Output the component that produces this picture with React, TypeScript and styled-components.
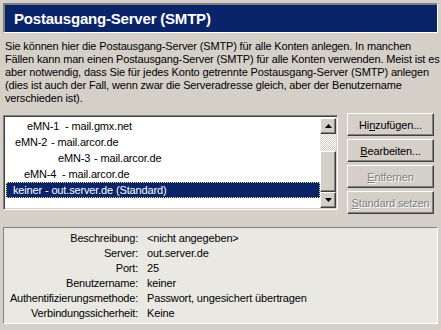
import styled, { createGlobalStyle, css } from "styled-components";

const GlobalStyle = createGlobalStyle`
  body {
    margin: 0;
    background: #d4d0c8;
    font-family: Tahoma, "Liberation Sans", Arial, sans-serif;
    font-size: 11px;
    color: #000;
  }
`;

const accounts = [
  { name: "eMN-1", host: "- mail.gmx.net", pad: 21, w: 38 },
  { name: "eMN-2", host: "- mail.arcor.de", pad: 9, w: 36 },
  { name: "eMN-3", host: "- mail.arcor.de", pad: 52, w: 36 },
  { name: "eMN-4", host: "- mail.arcor.de", pad: 18, w: 38 },
];

const details = [
  ["Beschreibung:", "<nicht angegeben>"],
  ["Server:", "out.server.de"],
  ["Port:", "25"],
  ["Benutzername:", "keiner"],
  ["Authentifizierungsmethode:", "Passwort, ungesichert übertragen"],
  ["Verbindungssicherheit:", "Keine"],
];

export default function App() {
  return (
    <>
      <GlobalStyle />
      <Page>
        <Header>
          <Title>Postausgang-Server (SMTP)</Title>
        </Header>
        <Description>
          Sie können hier die Postausgang-Server (SMTP) für alle Konten anlegen. In manchen
          <br />
          Fällen kann man einen Postausgang-Server (SMTP) für alle Konten verwenden. Meist ist es
          <br />
          aber notwendig, dass Sie für jedes Konto getrennte Postausgang-Server (SMTP) anlegen
          <br />
          (dies ist auch der Fall, wenn zwar die Serveradresse gleich, aber der Benutzername
          <br />
          verschieden ist).
        </Description>
        <Middle>
          <ListBox>
            <List>
              {accounts.map((a) => (
                <Item key={a.name}>
                  <Name $pad={a.pad} $w={a.w}>
                    {a.name}
                  </Name>
                  <span>{a.host}</span>
                </Item>
              ))}
              <Item $selected>
                <Name $pad={7}>keiner - out.server.de (Standard)</Name>
              </Item>
            </List>
            <ScrollBar>
              <ArrowBtn>
                <svg width="7" height="4" viewBox="0 0 7 4">
                  <path d="M3.5 0L7 4H0Z" fill="#000" />
                </svg>
              </ArrowBtn>
              <Track />
              <Thumb />
              <ArrowBtn>
                <svg width="7" height="4" viewBox="0 0 7 4">
                  <path d="M0 0H7L3.5 4Z" fill="#000" />
                </svg>
              </ArrowBtn>
            </ScrollBar>
          </ListBox>
          <Buttons>
            <Button>
              Hi<u>n</u>zufügen...
            </Button>
            <Button>
              <u>B</u>earbeiten...
            </Button>
            <Button disabled>
              <u>E</u>ntfernen
            </Button>
            <Button disabled>
              <u>S</u>tandard setzen
            </Button>
          </Buttons>
        </Middle>
        <Details>
          {details.map(([label, value]) => (
            <Row key={label}>
              <Label>{label}</Label>
              <Value>{value}</Value>
            </Row>
          ))}
        </Details>
      </Page>
    </>
  );
}

const raised = css`
  background: #d4d0c8;
  border: 1px solid;
  border-color: #fff #404040 #404040 #fff;
  box-shadow: inset -1px -1px 0 #808080;
  box-sizing: border-box;
`;

const Page = styled.div`
  width: 441px;
  height: 330px;
  box-sizing: border-box;
  padding: 3px 3px 0 3px;
  display: flex;
  flex-direction: column;
  overflow: hidden;
`;

const Header = styled.div`
  height: 30px;
  box-sizing: border-box;
  background: #0a246a;
  border: 1px solid;
  border-color: #808080 #fff #fff #808080;
  box-shadow: inset 1px 1px 0 #808080;
  display: flex;
  align-items: center;
  padding-left: 10px;
`;

const Title = styled.div`
  color: #fff;
  font-weight: bold;
  font-size: 15px;
  letter-spacing: -0.2px;
`;

const Description = styled.div`
  margin-top: 7px;
  padding-left: 2px;
  line-height: 13px;
  white-space: nowrap;
  letter-spacing: -0.15px;
`;

const Middle = styled.div`
  display: flex;
  align-items: flex-start;
  gap: 9px;
  margin-top: 8px;
`;

const ListBox = styled.div`
  width: 335px;
  height: 95px;
  margin-top: 2px;
  box-sizing: border-box;
  background: #fff;
  border: 1px solid;
  border-color: #808080 #fff #fff #808080;
  box-shadow: inset 1px 1px 0 #404040, inset -1px -1px 0 #d4d0c8;
  padding: 2px 1px 1px 2px;
  display: flex;
`;

const List = styled.div`
  flex: 1;
`;

const Item = styled.div<{ $selected?: boolean }>`
  height: 16px;
  line-height: 16px;
  display: flex;
  white-space: nowrap;
  letter-spacing: -0.15px;
  ${({ $selected }) =>
    $selected &&
    css`
      background: #0a246a;
      color: #fff;
      outline: 1px dotted #e8d878;
      outline-offset: -1px;
    `}
`;

const Name = styled.span<{ $pad: number; $w?: number }>`
  display: inline-block;
  padding-left: ${({ $pad }) => $pad}px;
  ${({ $w }) => $w !== undefined && `width: ${$w}px;`}
`;

const ScrollBar = styled.div`
  width: 16px;
  display: flex;
  flex-direction: column;
`;

const ArrowBtn = styled.div`
  ${raised};
  width: 16px;
  height: 16px;
  display: flex;
  align-items: center;
  justify-content: center;
`;

const Track = styled.div`
  height: 17px;
  background-color: #fff;
  background-image: conic-gradient(#d4d0c8 25%, #fff 0 50%, #d4d0c8 0 75%, #fff 0);
  background-size: 2px 2px;
`;

const Thumb = styled.div`
  ${raised};
  flex: 1;
`;

const Buttons = styled.div`
  display: flex;
  flex-direction: column;
  gap: 3px;
`;

const Button = styled.button`
  ${raised};
  width: 87px;
  height: 23px;
  padding: 0;
  font-family: inherit;
  font-size: 11px;
  color: #000;
  letter-spacing: -0.15px;
  &:disabled {
    color: #808080;
    text-shadow: 1px 1px 0 #fff;
  }
`;

const Details = styled.div`
  margin-top: 13px;
  height: 97px;
  box-sizing: border-box;
  background: #eae8e3;
  border: 1px solid;
  border-color: #808080 #fff #fff #808080;
  padding-top: 3px;
  display: grid;
  grid-template-columns: 134px 1fr;
  grid-auto-rows: 15px;
  column-gap: 9px;
  align-content: start;
`;

const Row = styled.div`
  display: contents;
`;

const Label = styled.div`
  text-align: right;
  line-height: 15px;
  white-space: nowrap;
  letter-spacing: -0.2px;
`;

const Value = styled.div`
  line-height: 15px;
  white-space: nowrap;
  letter-spacing: -0.15px;
`;
